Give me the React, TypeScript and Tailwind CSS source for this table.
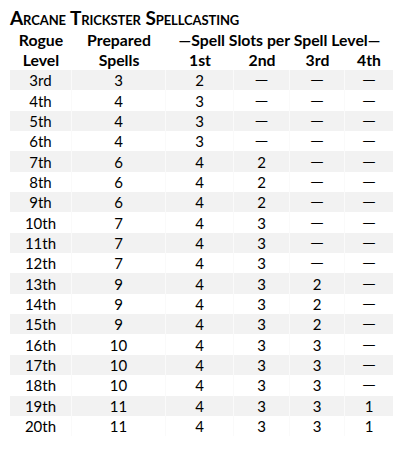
import React from "react";

const rows: [string, string, string, string, string, string][] = [
  ["3rd", "3", "2", "—", "—", "—"],
  ["4th", "4", "3", "—", "—", "—"],
  ["5th", "4", "3", "—", "—", "—"],
  ["6th", "4", "3", "—", "—", "—"],
  ["7th", "6", "4", "2", "—", "—"],
  ["8th", "6", "4", "2", "—", "—"],
  ["9th", "6", "4", "2", "—", "—"],
  ["10th", "7", "4", "3", "—", "—"],
  ["11th", "7", "4", "3", "—", "—"],
  ["12th", "7", "4", "3", "—", "—"],
  ["13th", "9", "4", "3", "2", "—"],
  ["14th", "9", "4", "3", "2", "—"],
  ["15th", "9", "4", "3", "2", "—"],
  ["16th", "10", "4", "3", "3", "—"],
  ["17th", "10", "4", "3", "3", "—"],
  ["18th", "10", "4", "3", "3", "—"],
  ["19th", "11", "4", "3", "3", "1"],
  ["20th", "11", "4", "3", "3", "1"],
];

const cols = "grid grid-cols-[62px_94px_68px_56px_55px_48px]";

export default function App() {
  return (
    <div className="w-[403px] h-[452px] bg-white px-[10px] pt-[6px] text-black font-['Lato','Liberation_Sans',sans-serif]">
      {/* Title */}
      <h1 className="text-[19px] leading-[24px] font-bold [font-variant-caps:small-caps] tracking-[-0.1px]">
        Arcane Trickster Spellcasting
      </h1>

      {/* Header */}
      <div className={`${cols} text-[15.8px] font-bold leading-[20px] text-center`}>
        <div className="flex flex-col">
          <span>Rogue</span>
          <span>Level</span>
        </div>
        <div className="flex flex-col">
          <span>Prepared</span>
          <span>Spells</span>
        </div>
        <div className="col-span-4 grid grid-cols-[68px_56px_55px_48px]">
          <span className="col-span-4">—Spell Slots per Spell Level—</span>
          <span>1st</span>
          <span>2nd</span>
          <span>3rd</span>
          <span>4th</span>
        </div>
      </div>

      {/* Body */}
      <div className="flex flex-col">
        {rows.map((r, i) => (
          <div
            key={r[0]}
            className={`${cols} h-[20.35px] items-center text-[15px] leading-[20px] text-center ${
              i % 2 === 0 ? "bg-[#f2f2f2]" : "bg-white"
            }`}
          >
            {r.map((c, j) => (
              <span
                key={j}
                className={`h-full flex items-center justify-center ${j < 5 ? "border-r border-[#fafafa]" : ""} ${
                  c === "—" ? "font-['DejaVu_Sans',sans-serif] text-[13px]" : ""
                }`}
              >
                {c}
              </span>
            ))}
          </div>
        ))}
      </div>
    </div>
  );
}
